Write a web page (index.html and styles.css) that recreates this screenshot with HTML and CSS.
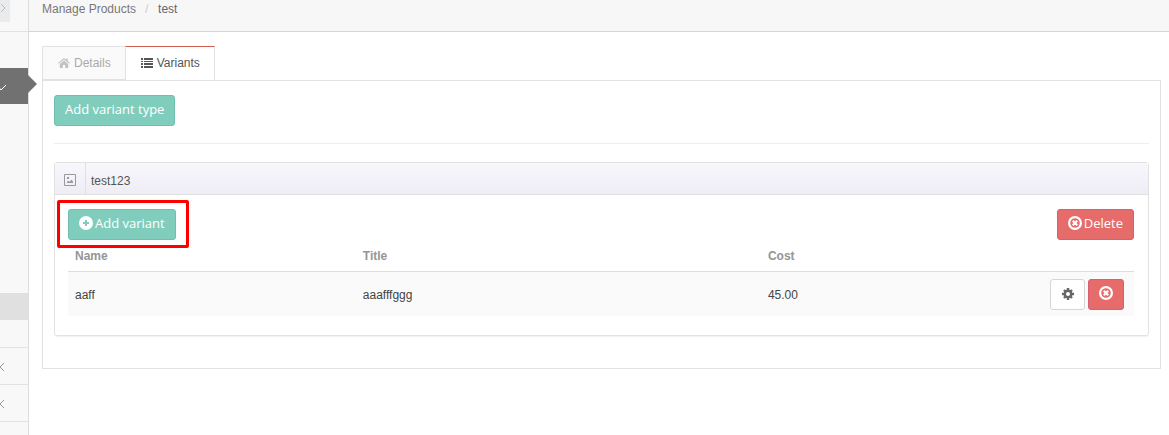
FILE: index.html
```
<!DOCTYPE html>
<html lang="en">

<head>
    <meta charset="utf-8">
    <title>Manage Products</title>

    <link rel="stylesheet" href="styles.css">
</head>

<body>
    <!-- shared icons -->
    <svg class="sprite" aria-hidden="true">
        <symbol id="remove" viewBox="0 0 14 14">
            <circle cx="7" cy="7" r="5.9" fill="none" stroke="currentColor" stroke-width="2.2" />
            <path d="M4.8 4.8l4.4 4.4M9.2 4.8l-4.4 4.4" stroke="currentColor" stroke-width="2.2" />
        </symbol>
        <symbol id="chevron" viewBox="0 0 6 10">
            <path d="M5 1L1 5l4 4" fill="none" stroke="currentColor" />
        </symbol>
    </svg>

    <div class="page">
        <nav class="sidebar">
            <div class="sideTop"><span class="toggle"><svg class="flip" width="6" height="10"><use href="#chevron" /></svg></span></div>
            <div class="sideGap"></div>
            <div class="sideActive"><svg width="10" height="7" viewBox="0 0 10 7"><path d="M1 2l3 4 5-5" fill="none" stroke="currentColor" /></svg></div>
            <div class="sideMenu">
                <div class="sideCurrent"></div>
            </div>
            <div class="sideItem"><svg width="6" height="10"><use href="#chevron" /></svg></div>
            <div class="sideItem"><svg width="6" height="10"><use href="#chevron" /></svg></div>
            <div class="sideItem"></div>
        </nav>

        <main class="content">
            <div class="breadcrumb">
                <a href="#">Manage Products</a>
                <span class="slash">/</span>
                <a href="#">test</a>
            </div>

            <div class="tabArea">
                <div class="tabs">
                    <a class="tab" href="#">
                        <svg width="12" height="10" viewBox="0 0 12 10"><path d="M6 2.4L10.2 6v4H7.2V7H4.8v3H1.8V6zM6 0l2.2 1.8V.6h1.5v2.5L12 5l-.6.8L6 1.4.6 5.8 0 5z" fill="currentColor" /></svg>
                        Details
                    </a>
                    <a class="tab active" href="#">
                        <svg width="12" height="10" viewBox="0 0 12 10"><path d="M0 0h2v2H0zM3 0h9v2H3zM0 3h2v1H0zM3 3h9v1H3zM0 5h2v2H0zM3 5h9v2H3zM0 8h2v2H0zM3 8h9v2H3z" fill="currentColor" /></svg>
                        Variants
                    </a>
                </div>

                <div class="pane">
                    <button class="btn green" type="button">Add variant type</button>
                    <hr>

                    <section class="box">
                        <div class="boxTitle">
                            <span class="boxIcon">
                                <svg width="12" height="12" viewBox="0 0 12 12"><path d="M.5.5h11v11H.5z" fill="none" stroke="currentColor" /><path d="M3 9V8l1-1h1l1 1 1-2h1l1 2v1zM3 3h2v2H3z" fill="currentColor" /></svg>
                            </span>
                            <span class="boxName">test123</span>
                        </div>
                        <div class="boxContent">
                            <div class="actions">
                                <div class="marked">
                                    <button class="btn green" type="button">
                                        <svg width="14" height="14" viewBox="0 0 14 14"><path fill-rule="evenodd" d="M7 0a7 7 0 1 0 0 14A7 7 0 0 0 7 0zM6 4h2v2h2v2H8v2H6V8H4V6h2z" fill="currentColor" /></svg>
                                        Add variant
                                    </button>
                                </div>
                                <button class="btn red" type="button">
                                    <svg width="14" height="14"><use href="#remove" /></svg>
                                    Delete
                                </button>
                            </div>

                            <table>
                                <thead>
                                    <tr>
                                        <th class="colName">Name</th>
                                        <th class="colTitle">Title</th>
                                        <th>Cost</th>
                                        <th class="colTools"></th>
                                    </tr>
                                </thead>
                                <tbody>
                                    <tr>
                                        <td>aaff</td>
                                        <td>aaafffggg</td>
                                        <td>45.00</td>
                                        <td>
                                            <div class="tools">
                                                <button class="btn white" type="button" aria-label="Settings">
                                                    <svg width="12" height="12" viewBox="0 0 12 12"><circle cx="6" cy="6" r="3.2" fill="none" stroke="currentColor" stroke-width="2.4" /><path d="M6 0v3M6 9v3M0 6h3M9 6h3M2 2l1.600 1.600M8.400 8.400L10 10M10 2L8.400 3.600M3.600 8.400L2 10" stroke="currentColor" stroke-width="2.4" /></svg>
                                                </button>
                                                <button class="btn red" type="button" aria-label="Delete variant">
                                                    <svg width="14" height="14"><use href="#remove" /></svg>
                                                </button>
                                            </div>
                                        </td>
                                    </tr>
                                </tbody>
                            </table>
                        </div>
                    </section>
                </div>
            </div>
        </main>
    </div>
</body>

</html>
```
FILE: styles.css
```
* {
    box-sizing: border-box;
}

body {
    margin: 0;
    font-family: "Liberation Sans", Arial, sans-serif;
    font-size: 12px;
    line-height: 16px;
    color: #555;
    background: #fff;
}

a {
    color: inherit;
    text-decoration: none;
}

.sprite {
    position: absolute;
    width: 0;
    height: 0;
}

.page {
    display: flex;
    min-height: 100vh;
}

/* sidebar */
.sidebar {
    flex: none;
    display: flex;
    flex-direction: column;
    width: 29px;
    background: #f8f8f8;
    border-right: 1px solid #ddd;
    color: #999;
}

.sideTop {
    height: 32px;
    border-bottom: 1px solid #e2e2e2;
}

.toggle {
    display: flex;
    align-items: center;
    width: 10px;
    height: 22px;
    padding-bottom: 6px;
    background: #eaebed;
    color: #bbb;
}

.flip {
    transform: scaleX(-1);
}

.sideGap {
    height: 36px;
}

.sideActive {
    position: relative;
    display: flex;
    align-items: center;
    height: 36px;
    background: #717171;
    color: #fff;
}

.sideActive svg {
    margin: 3px 0 0 -3px;
}

.sideActive::after {
    content: "";
    position: absolute;
    top: 7px;
    left: 100%;
    border: 9px solid transparent;
    border-left-color: #717171;
    border-right: 0;
}

.sideMenu {
    height: 244px;
    padding-top: 189px;
    border-bottom: 1px solid #e2e2e2;
}

.sideCurrent {
    height: 27px;
    background: #e0e0e0;
}

.sideItem {
    display: flex;
    align-items: center;
    height: 37px;
    border-bottom: 1px solid #e2e2e2;
}

.sideItem svg {
    margin: 2px 0 0 -1px;
}

.sideItem:last-child {
    flex: 1;
    border-bottom: 0;
}

/* main area */
.content {
    flex: 1;
    min-width: 0;
}

.breadcrumb {
    display: flex;
    height: 32px;
    padding: 1px 13px;
    background: #f7f7f7;
    border-bottom: 1px solid #d5d5d5;
    color: #777;
}

.slash {
    width: 22px;
    padding-left: 9px;
    color: #ccc;
}

.breadcrumb a:last-child {
    color: #666;
}

.tabArea {
    padding: 14px 8px 14px 13px;
}

.tabs {
    display: flex;
}

.tab {
    display: flex;
    align-items: center;
    gap: 4px;
    height: 34px;
    padding: 0 14px 1px 15px;
    background: #fafafa;
    border: 1px solid #e2e2e2;
    border-right: 0;
    color: #aaa;
}

.tab svg {
    color: #c2c2c2;
}

.tab.active {
    padding: 0 14px 2px 15px;
    background: #fff;
    border: 1px solid #e2e2e2;
    border-top-color: #d15b4f;
    border-bottom: 0;
    color: #555;
}

.tab.active svg {
    color: #555;
}

.pane {
    padding: 14px 11px 32px;
    border: 1px solid #e2e2e2;
}

hr {
    margin: 17px 0 18px;
    border: 0;
    border-top: 1px solid #eee;
}

.btn {
    display: flex;
    align-items: center;
    justify-content: center;
    gap: 2px;
    height: 31px;
    padding: 0 10px 3px;
    border: 1px solid #ccc;
    border-radius: 3px;
    font-family: "Open Sans", sans-serif;
    font-size: 13px;
    line-height: 18px;
    color: #fff;
}

.green {
    background: #80cdbd;
    border-color: #70bfae;
}

.red {
    background: #e66c6c;
    border-color: #d65f74;
}

.white {
    background: #fff;
    border-color: #d5d5d5;
    color: #666;
}

/* variant type box */
.box {
    border: 1px solid #e2e2e2;
    border-radius: 3px;
    box-shadow: 0 1px 1px #f2f2f2;
}

.boxTitle {
    display: flex;
    height: 32px;
    background: linear-gradient(#f8f7fc, #eeedf5);
    border-bottom: 1px solid #e0e0e0;
}

.boxIcon {
    display: flex;
    align-items: center;
    justify-content: center;
    width: 31px;
    padding-top: 2px;
    border-right: 1px solid #e0e0e0;
    color: #999;
}

.boxName {
    padding: 10px 5px 0;
}

.boxContent {
    padding: 14px 14px 19px 13px;
}

.actions {
    display: flex;
    justify-content: space-between;
}

.marked {
    position: relative;
}

.marked::after {
    content: "";
    position: absolute;
    inset: -9px -13px -8px -11px;
    border: 3px solid #f00;
    border-radius: 2px;
    pointer-events: none;
}

table {
    width: 100%;
    table-layout: fixed;
    border-collapse: separate;
    border-spacing: 0;
}

th,
td {
    padding: 7px;
    text-align: left;
}

th {
    height: 32px;
    padding-bottom: 6px;
    border-bottom: 1px solid #ddd;
    color: #959595;
}

td {
    padding-bottom: 6px;
    background: #fafafa;
    color: #444;
}

.colName {
    width: 27%;
}

.colTitle {
    width: 38%;
}

.colTools {
    width: 92px;
}

.tools {
    display: flex;
    gap: 3px;
    padding-left: 1px;
}

.tools .btn {
    width: 35px;
    padding: 0 0 1px;
}

.tools .red {
    width: 36px;
    padding-bottom: 3px;
}
```
